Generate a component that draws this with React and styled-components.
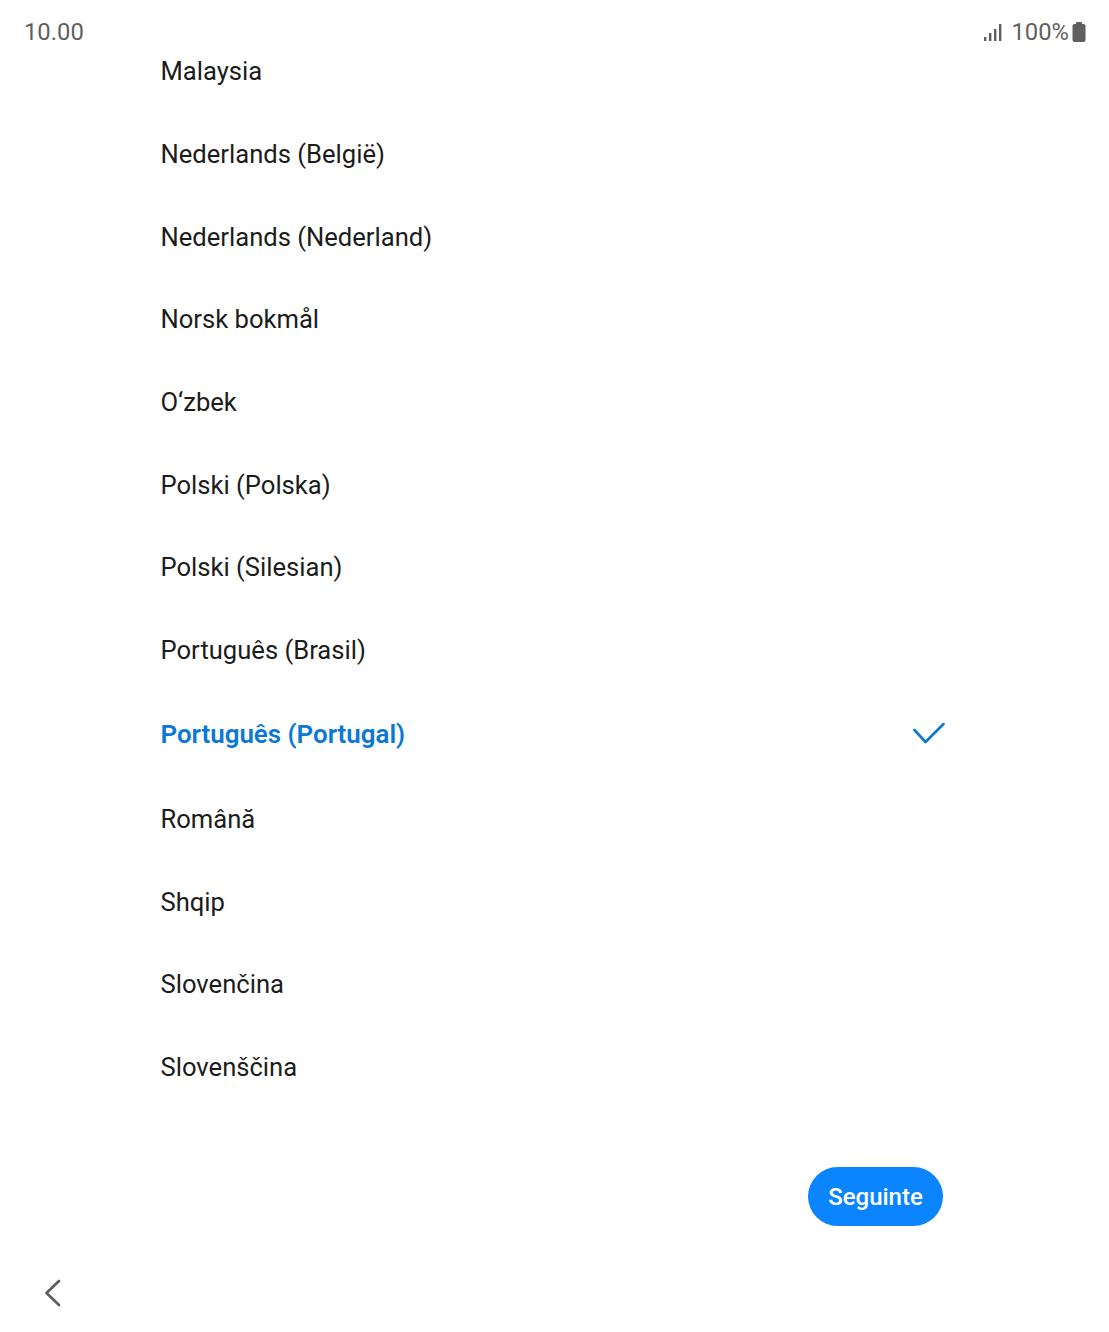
import React from 'react';
import styled, { createGlobalStyle } from 'styled-components';

const languages = [
  'Malaysia',
  'Nederlands (België)',
  'Nederlands (Nederland)',
  'Norsk bokmål',
  'O‘zbek',
  'Polski (Polska)',
  'Polski (Silesian)',
  'Português (Brasil)',
  'Português (Portugal)',
  'Română',
  'Shqip',
  'Slovenčina',
  'Slovenščina',
];

const selected = 'Português (Portugal)';

const GlobalStyle = createGlobalStyle`
  html, body {
    margin: 0;
    padding: 0;
    background: #fff;
  }
`;

const Screen = styled.div`
  width: 1109px;
  height: 1332px;
  display: flex;
  flex-direction: column;
  overflow: hidden;
  background: #fff;
  font-family: Roboto, "Liberation Sans", sans-serif;
`;

const StatusBar = styled.div`
  height: 30px;
  padding: 17px 23px 1px 24px;
  display: flex;
  justify-content: space-between;
  align-items: flex-start;
  color: #5f5f5f;
  font-size: 23.8px;
  line-height: 30px;
`;

const StatusRight = styled.div`
  display: flex;
  align-items: center;
`;

const Percent = styled.span`
  margin: 0 3px 0 9px;
`;

const List = styled.ul`
  list-style: none;
  margin: 0;
  padding: 0 164px 0 160.5px;
  height: 1119px;
`;

const Row = styled.li`
  height: ${({ $active }) => ($active ? '86.5px' : '82.65px')};
  margin-top: ${({ $first }) => ($first ? '-18px' : '0')};
  display: flex;
  justify-content: space-between;
  align-items: center;
  font-size: ${({ $active }) => ($active ? '25.9px' : '25.6px')};
  font-weight: ${({ $active }) => ($active ? 600 : 400)};
  color: ${({ $active }) => ($active ? '#0b78d6' : '#1c1c1c')};
`;

const Footer = styled.div`
  display: flex;
  justify-content: flex-end;
  padding-right: 166px;
`;

const NextButton = styled.button`
  width: 135px;
  height: 59px;
  border: 0;
  border-radius: 30px;
  background: #0a84ff;
  color: #fff;
  font-family: inherit;
  font-size: 24px;
  font-weight: 500;
`;

const BackBar = styled.div`
  padding: 52px 0 0 44px;
`;

const SignalIcon = () => (
  <svg width="18" height="18" viewBox="0 0 18 18" fill="#5f5f5f">
    <rect x="0" y="14" width="2.4" height="4" />
    <rect x="5" y="10" width="2.4" height="8" />
    <rect x="10" y="6" width="2.4" height="12" />
    <rect x="15" y="1" width="2.4" height="17" />
  </svg>
);

const BatteryIcon = () => (
  <svg width="14" height="20" viewBox="0 0 14 20" fill="#5f5f5f">
    <rect x="4" y="0" width="6" height="3" rx="1" />
    <rect x="0.5" y="2" width="13" height="18" rx="2" />
  </svg>
);

const CheckIcon = () => (
  <svg width="32" height="22" viewBox="0 0 32 22" fill="none" stroke="#0b78d6" strokeWidth="2.6" strokeLinecap="round" strokeLinejoin="round">
    <path d="M1.5 7 L12.5 19 L30.5 1" />
  </svg>
);

const BackIcon = () => (
  <svg width="18" height="30" viewBox="0 0 18 30" fill="none" stroke="#5f5f5f" strokeWidth="2.8" strokeLinecap="round" strokeLinejoin="round">
    <path d="M15 3 L2.5 15 L15 27" />
  </svg>
);

const App = () => {
  return (
    <Screen>
      <GlobalStyle />
      <StatusBar>
        <span>10.00</span>
        <StatusRight>
          <SignalIcon />
          <Percent>100%</Percent>
          <BatteryIcon />
        </StatusRight>
      </StatusBar>
      <List>
        {languages.map((lang, i) => (
          <Row key={lang} $first={i === 0} $active={lang === selected}>
            {lang}
            {lang === selected && <CheckIcon />}
          </Row>
        ))}
      </List>
      <Footer>
        <NextButton>Seguinte</NextButton>
      </Footer>
      <BackBar>
        <BackIcon />
      </BackBar>
    </Screen>
  );
};

export default App;
